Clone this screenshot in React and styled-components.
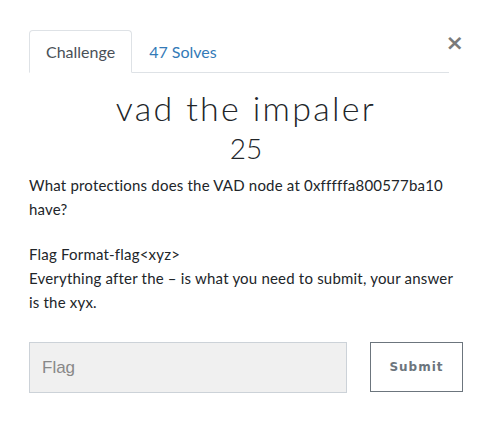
import React from 'react'
import styled, {createGlobalStyle} from 'styled-components'

const GlobalStyle = createGlobalStyle`
  body {
    margin: 0;
    background: #fff;
    font-family: Lato, "Open Sans", sans-serif;
    color: #212529;
  }
`

const Modal = styled.div`
  position: relative;
  width: 492px;
  height: 440px;
  padding: 30px 29px 0 29px;
  box-sizing: border-box;
`

const CloseButton = styled.button`
  position: absolute;
  top: 32px;
  right: 28px;
  border: 0;
  background: none;
  padding: 0;
  font-family: "DejaVu Sans", sans-serif;
  font-size: 22px;
  font-weight: 700;
  line-height: 1;
  color: #7a7a7a;
  cursor: pointer;
`

const Tabs = styled.ul`
  display: flex;
  list-style: none;
  margin: 0 14px 0 0;
  padding: 0;
  border-bottom: 1px solid #dee2e6;
`

const Tab = styled.li`
  margin-bottom: -1px;
  padding: 0 16px;
  height: 41px;
  display: flex;
  align-items: center;
  font-size: 16px;
  border: 1px solid ${props => (props.active ? '#dee2e6' : 'transparent')};
  border-bottom-color: ${props => (props.active ? '#fff' : 'transparent')};
  border-radius: 4px 4px 0 0;
  background: ${props => (props.active ? '#fff' : 'transparent')};
  color: ${props => (props.active ? '#495057' : '#337ab7')};
`

const Title = styled.h2`
  margin: 13px 0 0 0;
  text-align: center;
  font-weight: 300;
  font-size: 34px;
  letter-spacing: 2.3px;
  line-height: 44px;
  color: #212529;
`

const Points = styled.h4`
  margin: 0;
  text-align: center;
  font-weight: 300;
  font-size: 28px;
  line-height: 36px;
  color: #212529;
`

const Description = styled.div`
  margin-top: 7px;
  font-size: 15px;
  line-height: 24px;
  letter-spacing: 0.2px;

  p {
    margin: 0 0 21px 0;
  }
`

const SubmitRow = styled.div`
  display: flex;
  gap: 23px;
  margin-top: 28px;
`

const FlagInput = styled.input`
  width: 318px;
  height: 51px;
  box-sizing: border-box;
  border: 1px solid #ccd2d8;
  background: #f0f0f0;
  padding: 0 12px;
  font-family: "Liberation Sans", Arial, sans-serif;
  font-size: 17px;
  color: #555;
  outline: none;

  &::placeholder {
    color: #888;
  }
`

const SubmitButton = styled.button`
  width: 93px;
  height: 50px;
  box-sizing: border-box;
  border: 1px solid #6c757d;
  background: #fff;
  font-family: "DejaVu Sans", sans-serif;
  font-size: 12px;
  font-weight: 700;
  letter-spacing: 1px;
  color: #6c757d;
  cursor: pointer;
`

export default function App() {
  return (
    <Modal>
      <GlobalStyle/>
      <CloseButton aria-label="Close">×</CloseButton>
      <Tabs>
        <Tab active>Challenge</Tab>
        <Tab>47 Solves</Tab>
      </Tabs>
      <Title>vad the impaler</Title>
      <Points>25</Points>
      <Description>
        <p>What protections does the VAD node at 0xfffffa800577ba10 have?</p>
        <p>
          Flag Format-flag&lt;xyz&gt;<br/>
          Everything after the – is what you need to submit, your answer is the xyx.
        </p>
      </Description>
      <SubmitRow>
        <FlagInput placeholder="Flag"/>
        <SubmitButton>Submit</SubmitButton>
      </SubmitRow>
    </Modal>
  )
}
